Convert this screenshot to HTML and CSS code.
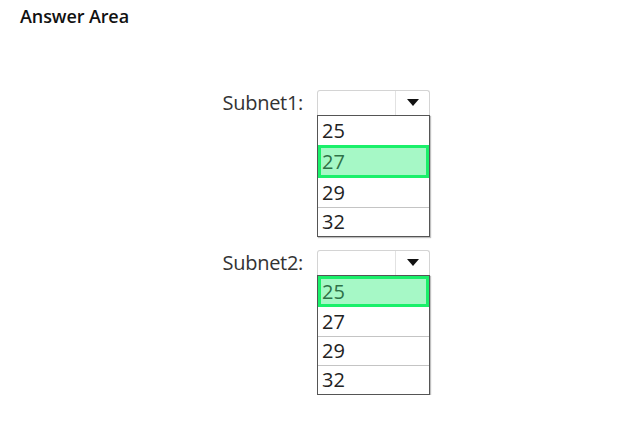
FILE: index.html
```html
<!DOCTYPE html>
<html lang="en">
<head>
    <meta charset="UTF-8">
    <title>Answer Area</title>
    <link rel="stylesheet" href="styles.css">
</head>
<body>

<h1 class="answer-title">Answer Area</h1>

<div class="answers">
    <div class="row">
        <span class="label">Subnet1:</span>
        <div class="dropdown">
            <div class="select">
                <span class="value"></span>
                <span class="arrow"></span>
            </div>
            <ul class="options">
                <li>25</li>
                <li class="selected">27</li>
                <li>29</li>
                <li>32</li>
            </ul>
        </div>
    </div>

    <div class="row">
        <span class="label">Subnet2:</span>
        <div class="dropdown">
            <div class="select">
                <span class="value"></span>
                <span class="arrow"></span>
            </div>
            <ul class="options">
                <li class="selected">25</li>
                <li>27</li>
                <li>29</li>
                <li>32</li>
            </ul>
        </div>
    </div>
</div>

</body>
</html>
```

FILE: styles.css
```css
body {
    margin: 0;
    background: #fff;
    color: #222;
    font-family: "Open Sans", "Noto Sans", sans-serif;
}
.answer-title {
    margin: 4px 0 0 20px;
    font-size: 18px;
    font-weight: 600;
    line-height: 24px;
    color: #111;
    letter-spacing: -0.1px;
}
.answers {
    display: flex;
    flex-direction: column;
    gap: 13px;
    padding-top: 62px;
}
.row {
    display: flex;
    align-items: flex-start;
    gap: 14px;
}
.label {
    width: 303px;
    text-align: right;
    font-size: 20px;
    line-height: 25px;
    color: #333;
    letter-spacing: -0.3px;
}
.dropdown {
    width: 113px;
}
.select {
    display: flex;
    height: 25px;
    box-sizing: border-box;
    border: 1px solid #d4d4d4;
    border-bottom: none;
    border-radius: 3px 3px 0 0;
}
.value {
    width: 77px;
    border-right: 1px solid #e2e2e2;
}
.arrow {
    flex: 1;
    position: relative;
}
.arrow::after {
    content: "";
    position: absolute;
    left: 11px;
    top: 8px;
    border-left: 6px solid transparent;
    border-right: 6px solid transparent;
    border-top: 7px solid #111;
}
.options {
    list-style: none;
    margin: 0;
    padding: 0;
    border: 1.5px solid #555;
    box-shadow: 1px 1px 1px rgba(0, 0, 0, 0.25);
}
.options li {
    height: 28px;
    line-height: 28px;
    padding-left: 4px;
    font-size: 20px;
    color: #222;
    border-top: 1px solid #c4c4c4;
}
.options li:first-child {
    height: 29px;
    line-height: 29px;
    border-top: none;
}
.options li.selected {
    height: 27px;
    line-height: 27px;
    padding-left: 1px;
    background: #a6f8c6;
    border: 3px solid #1af06a;
    color: #2f7148;
}
.options li.selected:first-child {
    height: 25px;
    line-height: 25px;
}
.options li.selected + li {
    height: 29px;
    line-height: 29px;
    border-top: none;
}
```
